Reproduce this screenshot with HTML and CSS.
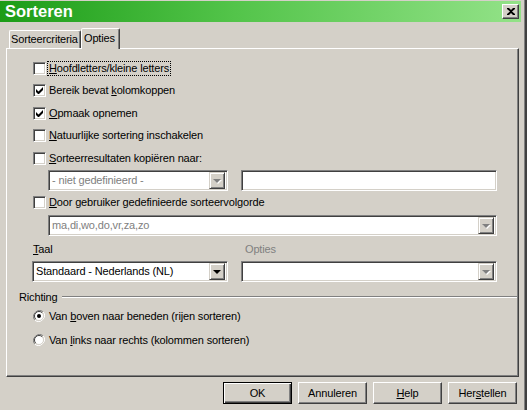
FILE: index.html
```html
<!DOCTYPE html>
<html>
<head>
<meta charset="utf-8">
<title>Sorteren</title>
<link rel="stylesheet" href="styles.css">
</head>
<body>
<div class="window">
  <div class="titlebar">
    <span class="title">Sorteren</span>
    <span class="close"><svg width="8" height="7" viewBox="0 0 8 7"><path d="M0 0h2l2 2 2-2h2v1L5 3.5 8 6v1H6L4 5 2 7H0V6l3-2.5L0 1z" fill="#000"/></svg></span>
  </div>
  <div class="tabs">
    <div class="tab">Sorteercriteria</div>
    <div class="tab active">Opties</div>
  </div>
  <div class="panel">
    <div class="row">
      <span class="cb"></span><span class="lbl focus"><span class="u">H</span>oofdletters/kleine letters</span>
    </div>
    <div class="row">
      <span class="cb"><svg width="7" height="7" viewBox="0 0 7 7"><path d="M0 2v3l2 2h1l4-4V0L2.5 4.5z" fill="#000"/></svg></span><span class="lbl">Bereik bevat <span class="u">k</span>olomkoppen</span>
    </div>
    <div class="row">
      <span class="cb"><svg width="7" height="7" viewBox="0 0 7 7"><path d="M0 2v3l2 2h1l4-4V0L2.5 4.5z" fill="#000"/></svg></span><span class="lbl"><span class="u">O</span>pmaak opnemen</span>
    </div>
    <div class="row">
      <span class="cb"></span><span class="lbl"><span class="u">N</span>atuurlijke sortering inschakelen</span>
    </div>
    <div class="row">
      <span class="cb"></span><span class="lbl"><span class="u">S</span>orteerresultaten kopiëren naar:</span>
    </div>
    <div class="copy-row">
      <div class="combo w180">
        <span class="ctext dis">- niet gedefinieerd -</span>
        <span class="cbtn"><span class="tri dis-tri"></span></span>
      </div>
      <div class="field w256"></div>
    </div>
    <div class="row door">
      <span class="cb"></span><span class="lbl"><span class="u">D</span>oor gebruiker gedefinieerde sorteervolgorde</span>
    </div>
    <div class="combo wide">
      <span class="ctext dis">ma,di,wo,do,vr,za,zo</span>
      <span class="cbtn"><span class="tri dis-tri"></span></span>
    </div>
    <div class="lang-labels">
      <span class="lbl taal"><span class="u">T</span>aal</span>
      <span class="lbl dis optlbl">Opties</span>
    </div>
    <div class="lang-row">
      <div class="combo w196">
        <span class="ctext">Standaard - Nederlands (NL)</span>
        <span class="cbtn"><span class="tri"></span></span>
      </div>
      <div class="combo w256">
        <span class="ctext"></span>
        <span class="cbtn"><span class="tri dis-tri"></span></span>
      </div>
    </div>
    <div class="group-head">
      <span class="lbl">Richting</span>
      <span class="groove"></span>
    </div>
    <div class="radio-row first">
      <span class="rb"><svg width="12" height="12" viewBox="0 0 12 12"><path d="M10.2 1.8A6 6 0 0 0 1.8 10.2" fill="none" stroke="#808080" stroke-width="1"/><path d="M1.8 10.2A6 6 0 0 0 10.2 1.8" fill="none" stroke="#fff" stroke-width="1"/><circle cx="6" cy="6" r="4.5" fill="#fff"/><path d="M9.2 2.8A4.5 4.5 0 0 0 2.8 9.2" fill="none" stroke="#404040" stroke-width="1"/><path d="M2.8 9.2A4.5 4.5 0 0 0 9.2 2.8" fill="none" stroke="#d4d0c8" stroke-width="1"/><circle cx="6" cy="6" r="2" fill="#000"/></svg></span>
      <span class="lbl">Van <span class="u">b</span>oven naar beneden (rijen sorteren)</span>
    </div>
    <div class="radio-row second">
      <span class="rb"><svg width="12" height="12" viewBox="0 0 12 12"><path d="M10.2 1.8A6 6 0 0 0 1.8 10.2" fill="none" stroke="#808080" stroke-width="1"/><path d="M1.8 10.2A6 6 0 0 0 10.2 1.8" fill="none" stroke="#fff" stroke-width="1"/><circle cx="6" cy="6" r="4.5" fill="#fff"/><path d="M9.2 2.8A4.5 4.5 0 0 0 2.8 9.2" fill="none" stroke="#404040" stroke-width="1"/><path d="M2.8 9.2A4.5 4.5 0 0 0 9.2 2.8" fill="none" stroke="#d4d0c8" stroke-width="1"/></svg></span>
      <span class="lbl">Van <span class="u">l</span>inks naar rechts (kolommen sorteren)</span>
    </div>
  </div>
  <div class="buttons">
    <div class="btn default"><span>OK</span></div>
    <div class="btn"><span>Annuleren</span></div>
    <div class="btn"><span><span class="u">H</span>elp</span></div>
    <div class="btn"><span>Her<span class="u">s</span>tellen</span></div>
  </div>
</div>
</body>
</html>
```
FILE: styles.css
```css
html, body {
  margin: 0;
  padding: 0;
}
body {
  width: 527px;
  height: 410px;
  overflow: hidden;
  background: #d4d0c8;
  font-family: "Liberation Sans", Arial, sans-serif;
  font-size: 11px;
  letter-spacing: -0.15px;
  color: #000;
}
.window {
  box-sizing: border-box;
  width: 527px;
  height: 410px;
  padding: 1px 2px 0 0;
  border-right: 2px solid #404040;
  box-shadow: inset -1px 0 #808080;
}
.titlebar {
  height: 21px;
  margin-right: 2px;
  background: linear-gradient(to right, #1c9c17 0%, #53c44a 45%, #93e288 100%);
  display: flex;
  align-items: center;
  justify-content: space-between;
  padding: 0 2px 0 5px;
}
.title {
  color: #fff;
  font-weight: bold;
  font-size: 16.5px;
  letter-spacing: 0;
  line-height: 21px;
}
.close {
  box-sizing: border-box;
  width: 17px;
  height: 15px;
  background: #d4d0c8;
  border: 1px solid;
  border-color: #fff #404040 #404040 #fff;
  box-shadow: inset -1px -1px #808080;
  display: flex;
  align-items: center;
  justify-content: center;
}
.close svg { display: block; }
.tabs {
  display: flex;
  align-items: flex-end;
  height: 26px;
  padding-left: 9px;
}
.tab {
  box-sizing: border-box;
  height: 18px;
  border: 1px solid;
  border-bottom: none;
  border-color: #fff #404040 transparent #fff;
  box-shadow: inset -1px 0 #808080;
  border-radius: 2px 2px 0 0;
  padding: 2px 0 0 1px;
  width: 72px;
  line-height: 13px;
  white-space: nowrap;
  overflow: hidden;
}
.tab.active {
  height: 21px;
  width: 39px;
  margin-bottom: -1px;
  background: #d4d0c8;
  position: relative;
  padding: 3px 0 0 2px;
}
.panel {
  box-sizing: border-box;
  width: 513px;
  height: 329px;
  margin-left: 6px;
  border: 1px solid;
  border-color: #fff #404040 #404040 #fff;
  box-shadow: inset -1px -1px #808080;
  padding: 7.75px 0 0 26px;
}
.row {
  height: 22.5px;
  display: flex;
  align-items: center;
}
.cb {
  box-sizing: border-box;
  width: 13px;
  height: 13px;
  background: #fff;
  border: 1px solid;
  border-color: #808080 #fff #fff #808080;
  box-shadow: inset 1px 1px #404040, inset -1px -1px #d4d0c8;
  display: flex;
  align-items: center;
  justify-content: center;
  flex: none;
}
.cb svg { display: block; }
.lbl {
  line-height: 13px;
  padding: 0 1px;
  margin-left: 2px;
  white-space: nowrap;
}
.focus {
  outline: 1px dotted #000;
  outline-offset: 0;
}
.u { text-decoration: underline; }
.dis { color: #808080; }
.copy-row {
  display: flex;
  margin-top: 0.75px;
  padding-left: 15px;
  gap: 13px;
}
.combo, .field {
  box-sizing: border-box;
  height: 21px;
  background: #fff;
  border: 1px solid;
  border-color: #808080 #fff #fff #808080;
  box-shadow: inset 1px 1px #404040, inset -1px -1px #d4d0c8;
  display: flex;
  align-items: center;
  padding: 2px;
}
.w180 { width: 180px; }
.w196 { width: 196px; }
.w256 { width: 256px; }
.wide { width: 449px; margin-left: 15px; margin-top: 1px; }
.ctext {
  flex: 1;
  padding-left: 1px;
  white-space: nowrap;
  overflow: hidden;
  line-height: 13px;
}
.cbtn {
  box-sizing: border-box;
  width: 16px;
  height: 17px;
  background: #d4d0c8;
  border: 1px solid;
  border-color: #d4d0c8 #404040 #404040 #d4d0c8;
  box-shadow: inset 1px 1px #fff, inset -1px -1px #808080;
  display: flex;
  align-items: center;
  justify-content: center;
  flex: none;
}
.tri {
  width: 0;
  height: 0;
  border-left: 4px solid transparent;
  border-right: 4px solid transparent;
  border-top: 4px solid #000;
  margin-top: 1px;
}
.tri.dis-tri {
  border-top-color: #808080;
  filter: drop-shadow(1px 1px 0 #fff);
}
.door { margin-top: 0.5px; }
.lang-labels {
  display: flex;
  margin-top: 6px;
  height: 14px;
  align-items: center;
}
.lang-labels .taal { margin-left: -1px; width: 208px; }
.lang-row {
  display: flex;
  gap: 13px;
  margin-top: 5px;
  margin-left: -1px;
}
.group-head {
  display: flex;
  align-items: center;
  height: 14px;
  margin-top: 8px;
  margin-left: -15px;
  margin-right: 1px;
}
.group-head .lbl { margin-left: 0; }
.groove {
  flex: 1;
  height: 0;
  border-top: 1px solid #808080;
  border-bottom: 1px solid #fff;
  margin-left: 3px;
}
.radio-row {
  display: flex;
  align-items: center;
  height: 14px;
}
.radio-row.first { margin-top: 5px; }
.radio-row.second { margin-top: 10px; }
.rb { width: 12px; height: 12px; flex: none; }
.rb svg { display: block; }
.radio-row .lbl { margin-left: 3px; }
.buttons {
  display: flex;
  justify-content: flex-end;
  gap: 6px;
  margin-top: 5px;
  padding-right: 6px;
}
.btn {
  box-sizing: border-box;
  width: 69px;
  height: 22px;
  border: 1px solid;
  border-color: #fff #404040 #404040 #fff;
  box-shadow: inset -1px -1px #808080;
  display: flex;
  align-items: center;
  justify-content: center;
  line-height: 13px;
}
.btn.default {
  border: 1px solid #000;
  box-shadow: inset 1px 1px #fff, inset -1px -1px #404040, inset -2px -2px #808080;
}
```
